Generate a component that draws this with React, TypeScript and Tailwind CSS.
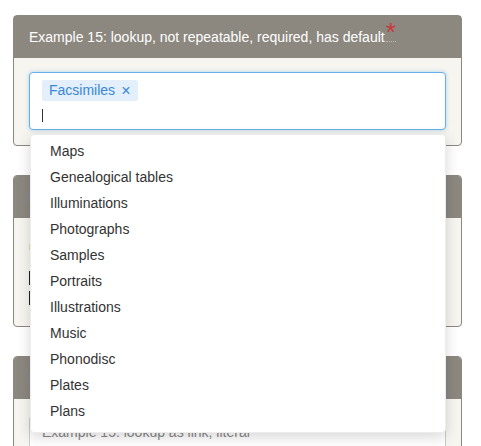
import React from "react";

const items = [
  "Maps",
  "Genealogical tables",
  "Illuminations",
  "Photographs",
  "Samples",
  "Portraits",
  "Illustrations",
  "Music",
  "Phonodisc",
  "Plates",
  "Plans",
];

export default function App() {
  return (
    <div className="w-[481px] h-[446px] overflow-hidden bg-white" style={{ fontFamily: '"Liberation Sans", Arial, sans-serif' }}>
      <div className="pt-[15px] pl-[13px] w-[462px] flex flex-col gap-[29px]">
        {/* Card 1 */}
        <div className="border border-[#8c8880] rounded-[4px] bg-[#f7f5ef]">
          <div className="h-[42px] bg-[#8c8880] px-[15px] flex items-center text-white text-[14px] leading-[20px]">
            <span>Example 15: lookup, not repeatable, required, has default</span>
            <span className="relative -top-[5px] ml-px text-[#c9383a] text-[26px] leading-[20px] border-b border-dotted border-[#bdb8b0] h-[20px]">
              *
            </span>
          </div>
          <div className="px-[15px] pt-[14px] pb-[15px]">
            <div className="relative">
              <div className="h-[58px] bg-white border border-[#66afe9] rounded-[4px] shadow-[0_0_4px_rgba(102,175,233,0.5)] px-[12px] pt-[5px]">
                <div className="inline-flex items-center h-[21px] pl-[7px] pr-[8px] bg-[#e3f0fc] rounded-[2px] text-[#3a87d6] text-[14px]">
                  <span>Facsimiles</span>
                  <span className="ml-[6px] text-[16px] leading-none">×</span>
                </div>
                <div className="mt-[7px] w-px h-[13px] bg-[#333]" />
              </div>
              <div className="absolute z-10 left-px top-[62px] w-[416px] bg-white rounded-[4px] shadow-[0_4px_14px_rgba(0,0,0,0.16)] border border-[#ececec] pt-[3px] pb-[8px]">
                {items.map((it) => (
                  <div key={it} className="h-[26px] flex items-center pl-[19px] text-[14px] text-[#333]">
                    {it}
                  </div>
                ))}
              </div>
            </div>
          </div>
        </div>

        {/* Card 2 */}
        <div className="h-[152px] border border-[#8c8880] rounded-[4px] bg-[#f7f5ef] overflow-hidden">
          <div className="h-[42px] bg-[#8c8880] px-[15px] flex items-center text-[14px]">
            <span className="text-[#4a90d9]">Example 16: lookup as link</span>
          </div>
          <div className="px-[15px] pt-[26px]">
            <div className="h-[6px] w-[20px] bg-[#e8dcb0]" />
            <div className="mt-[21px] h-[14px] w-[40px] bg-[#222]" />
            <div className="mt-[6px] h-[14px] w-[40px] bg-[#222]" />
          </div>
        </div>

        {/* Card 3 */}
        <div className="h-[120px] border border-[#8c8880] rounded-[4px] bg-[#f7f5ef] overflow-hidden">
          <div className="h-[42px] bg-[#8c8880] px-[15px] flex items-center text-[14px]">
            <span className="text-[#4a90d9]">Example 17: lookup as link, literal</span>
          </div>
          <div className="px-[15px] pt-[16px]">
            <div className="h-[40px] bg-white border border-[#ccc] rounded-[4px] px-[12px] pt-[6px] text-[14px] text-[#888]">
              Example 15: lookup as link, literal
            </div>
          </div>
        </div>
      </div>
    </div>
  );
}
